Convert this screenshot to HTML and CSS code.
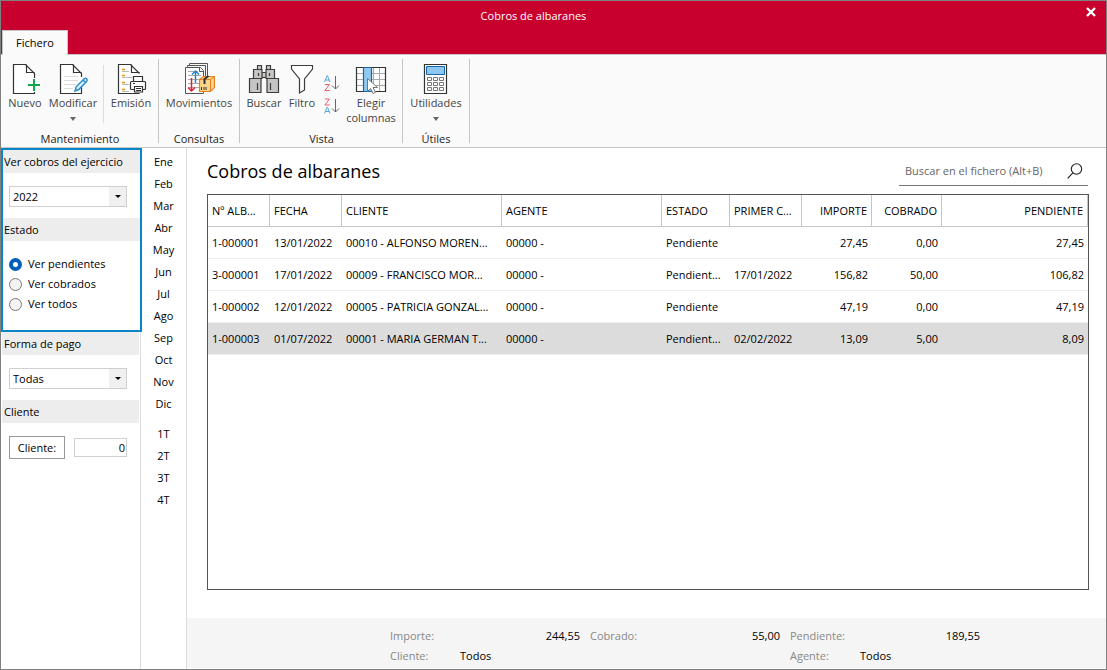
FILE: index.html
```html
<!DOCTYPE html>
<html lang="es">
<head>
<meta charset="utf-8">
<title>Cobros de albaranes</title>
<link rel="stylesheet" href="styles.css">
</head>
<body>
<div class="window">
  <header class="titlebar">
    <div class="title">Cobros de albaranes</div>
    <button class="close" type="button" aria-label="Cerrar"><svg width="10" height="10" viewBox="0 0 10 10"><path d="M1 1l8 8M9 1l-8 8" stroke="#fff" stroke-width="2.400"/></svg></button>
    <button class="tab" type="button">Fichero</button>
  </header>

  <nav class="ribbon">
    <section class="group g-mant">
      <div class="tools">
        <button class="tool w-46" type="button">
          <svg class="icon" viewBox="0 0 32 32" fill="none" stroke="#333" stroke-width="1.2"><path d="M25.500 15V10.500L16.500 1.500H4.500V30.500H25.500V29" fill="#fff"/><path d="M17.500 1.500V9.500H25.500"/><path d="M25 16v12M19 22h12" stroke="#0ea64e" stroke-width="2"/></svg>
          <span>Nuevo</span>
        </button>
        <button class="tool w-50" type="button">
          <svg class="icon" viewBox="0 0 32 32" fill="none" stroke="#333" stroke-width="1.2"><path d="M24.500 14V10.500L15.500 1.500H3.500V30.500H24.500V24" fill="#fff"/><path d="M16.500 1.500V9.500H24.500"/><path d="M7 13.500h14M7 17.500h14M7 21.500h12M7 25.500h9" stroke="#ddd" stroke-width="1"/><path d="M18 28l1.200-4.200 8-8q1.400-1.200 2.500 0t0 2.500l-8 8.200zM26 17l2.500 2.500" fill="#dff0fa" stroke="#2a8dcc" stroke-width="1.500"/></svg>
          <span>Modificar</span>
          <svg class="drop" viewBox="0 0 6 4"><path d="M0 0h6L3 4z" fill="#666"/></svg>
        </button>
        <i class="divider"></i>
        <button class="tool w-54" type="button">
          <svg class="icon" viewBox="0 0 32 32" fill="none" stroke="#333" stroke-width="1.200"><path d="M24.500 10.500L15.500 1.500H3.500V30.500H24.500" fill="#fff"/><path d="M16.500 1.500V9.500H24.500"/><path d="M7 6.500h3M7 12.500h3M7 19.500h3M7 26.500h3" stroke="#e79514" stroke-width="1.500"/><path d="M7 8.500h7M7 14.500h10M7 21.500h7M7 28.500h7" stroke="#bbb" stroke-width="1"/><path d="M18.500 19v-5.500h9V19" fill="#fff"/><rect x="15.500" y="18.500" width="15" height="8" rx="1" fill="#fff"/><path d="M19.500 23.500h8v5.500h-8z" fill="#fff"/><path d="M18 20.500h2M21 25.500h5M21 27.500h5" stroke-width="1"/></svg>
          <span>Emisión</span>
        </button>
      </div>
      <h2>Mantenimiento</h2>
    </section>
    <section class="group g-cons">
      <div class="tools">
        <button class="tool w-80" type="button">
          <svg class="icon" viewBox="0 0 32 32" fill="none" stroke="#555" stroke-width="1"><path d="M6.500 3V.5h18V13M4.500 5V2.500h18V13"/><path d="M2.500 4.500h15l3 3V30.500h-18z" fill="#fff"/><path d="M16.500 4.500v4h4"/><path d="M5 8.500h10M5 12.500h13M5 16.500h13M5 20.500h12M5 24.500h12" stroke="#aaa"/><path d="M12.500 20V8M9 11.500L12.500 8l3.500 3.500" stroke="#2486c8" stroke-width="1.500"/><path d="M8.500 15v13M5 24.500l3.500 3.500 3.500-3.500" stroke="#df2034" stroke-width="1.500"/><path d="M16.500 16.500l4-3h11v11l-4 4h-11z" fill="#f8d58a" stroke="#e58021" stroke-width="1.200"/><path d="M16.500 16.500h11l4-3M27.500 16.500v12" stroke="#e58021"/><path d="M21.500 21v-5l4-3" stroke="#333" stroke-width="2"/><path d="M18.500 24v3M21 24v3M23 24v3" stroke="#333"/></svg>
          <span>Movimientos</span>
        </button>
      </div>
      <h2>Consultas</h2>
    </section>
    <section class="group g-vista">
      <div class="tools">
        <button class="tool w-46" type="button">
          <svg class="icon" viewBox="0 0 32 32" fill="#c7c5c4" stroke="#3c3c3c" stroke-width="1.200"><path d="M9.500 2.500h4v4h-4zM18.500 2.500h4v4h-4zM13 9.500h6v5h-6z"/><path d="M5.500 6.500h8.500v9H5.500zM18 6.500h8.500v9H18zM1.500 15.500h11.500v14H1.500zM19 15.500h11.500v14H19z"/><path d="M10.500 10v3M21.500 10v3M9.500 20v7M22.500 20v7"/></svg>
          <span>Buscar</span>
        </button>
        <button class="tool w-30" type="button">
          <svg class="icon" viewBox="0 0 32 32" fill="#fff" stroke="#3c3c3c" stroke-width="1.200"><path d="M5.500 2.500h21v3.500l-8 10v11l-5 3V16l-8-10z"/></svg>
          <span>Filtro</span>
        </button>
        <div class="sorts">
          <button type="button" aria-label="Orden ascendente"><svg width="16" height="16" viewBox="0 0 16 16" fill="none"><path d="M.5 7L3 .8h.5L6 7M1.500 5h4" stroke="#55a9df"/><path d="M.8 9.500h4.700L.8 15.500h5" stroke="#e8616c"/><path d="M11.500 1v13M8 10.500l3.500 3.500 3.500-3.500" stroke="#666"/></svg></button>
          <button type="button" aria-label="Orden descendente"><svg width="16" height="16" viewBox="0 0 16 16" fill="none"><path d="M.8 1h4.700L.8 7h5" stroke="#e8616c"/><path d="M.5 15.500L3 9.300h.5L6 15.500M1.500 13.500h4" stroke="#55a9df"/><path d="M11.500 1v13M8 10.500l3.500 3.500 3.500-3.500" stroke="#666"/></svg></button>
        </div>
        <button class="tool w-48" type="button">
          <svg class="icon" viewBox="0 0 32 32" fill="none"><path d="M1.500 4.500h29v24h-29z" fill="#fff"/><path d="M1 10.500h30M1 16.500h30M1 22.500h30M18.500 4v24M24.500 4v24" stroke="#aaa"/><path d="M1.500 4.500h29v24h-29z" stroke="#333" stroke-width="1.200"/><path d="M8.500 4.500h8v24h-8z" fill="#92c9ef" stroke="#1467ad" stroke-width="1.200"/><path d="M12.500 15.500v13l3-3 2.500 5 2.500-1.200-2.500-4.800h4.500z" fill="#fff" stroke="#777"/></svg>
          <span>Elegir columnas</span>
        </button>
      </div>
      <h2>Vista</h2>
    </section>
    <section class="group g-util">
      <div class="tools">
        <button class="tool w-66" type="button">
          <svg class="icon" viewBox="0 0 32 32" fill="#fff"><path d="M4.500 1.500h22v29h-22z" stroke="#333" stroke-width="1.200"/><path d="M6.500 3.500h18v8h-18z" fill="#8dc6ef" stroke="#1467ad"/><path d="M7.500 14.500h4v3h-4zM13.500 14.500h4v3h-4zM19.500 14.500h4v3h-4zM7.500 19.500h4v3h-4zM13.500 19.500h4v3h-4zM19.500 19.500h4v3h-4zM7.500 24.500h4v3h-4zM13.500 24.500h4v3h-4zM19.500 24.500h4v3h-4z" stroke="#777"/></svg>
          <span>Utilidades</span>
          <svg class="drop" viewBox="0 0 6 4"><path d="M0 0h6L3 4z" fill="#666"/></svg>
        </button>
      </div>
      <h2>Útiles</h2>
    </section>
  </nav>

  <div class="body">
    <aside class="filters">
      <div class="focus">
        <h3><label for="ejercicio">Ver cobros del ejercicio</label></h3>
        <div class="combo"><select id="ejercicio"><option>2022</option></select><span class="arrow"><svg width="6" height="3" viewBox="0 0 6 3"><path d="M0 0h6L3 3z"/></svg></span></div>
        <h3>Estado</h3>
        <div class="radios">
          <label><input type="radio" name="estado" checked>Ver pendientes</label>
          <label><input type="radio" name="estado">Ver cobrados</label>
          <label><input type="radio" name="estado">Ver todos</label>
        </div>
      </div>
      <div class="more">
        <h3><label for="pago">Forma de pago</label></h3>
        <div class="combo"><select id="pago"><option>Todas</option></select><span class="arrow"><svg width="6" height="3" viewBox="0 0 6 3"><path d="M0 0h6L3 3z"/></svg></span></div>
        <h3>Cliente</h3>
        <div class="client"><button type="button">Cliente:</button><input type="text" value="0" aria-label="Cliente"></div>
      </div>
    </aside>

    <nav class="periods">
      <button type="button">Ene</button><button type="button">Feb</button><button type="button">Mar</button><button type="button">Abr</button><button type="button">May</button><button type="button">Jun</button><button type="button">Jul</button><button type="button">Ago</button><button type="button">Sep</button><button type="button">Oct</button><button type="button">Nov</button><button type="button">Dic</button>
      <button class="quarter" type="button">1T</button><button type="button">2T</button><button type="button">3T</button><button type="button">4T</button>
    </nav>

    <main class="main">
      <div class="content">
        <div class="heading">
          <h1>Cobros de albaranes</h1>
          <div class="search"><input type="text" placeholder="Buscar en el fichero (Alt+B)" aria-label="Buscar en el fichero"><svg width="16" height="16" viewBox="0 0 16 16" fill="none" stroke="#222" stroke-width="1.100"><circle cx="9.500" cy="6" r="5.200"/><path d="M5.800 9.800L.7 15.300"/></svg></div>
        </div>
        <div class="grid">
          <table>
            <colgroup><col class="c-62"><col class="c-72"><col class="c-160"><col class="c-160"><col class="c-68"><col class="c-72"><col class="c-70"><col class="c-70"><col></colgroup>
            <thead><tr><th>Nº ALB...</th><th>FECHA</th><th>CLIENTE</th><th>AGENTE</th><th>ESTADO</th><th>PRIMER C...</th><th class="num">IMPORTE</th><th class="num">COBRADO</th><th class="num">PENDIENTE</th></tr></thead>
            <tbody>
              <tr><td>1-000001</td><td>13/01/2022</td><td>00010 - ALFONSO MOREN...</td><td>00000 -</td><td>Pendiente</td><td></td><td class="num">27,45</td><td class="num">0,00</td><td class="num">27,45</td></tr>
              <tr><td>3-000001</td><td>17/01/2022</td><td>00009 - FRANCISCO MOR...</td><td>00000 -</td><td>Pendient...</td><td>17/01/2022</td><td class="num">156,82</td><td class="num">50,00</td><td class="num">106,82</td></tr>
              <tr><td>1-000002</td><td>12/01/2022</td><td>00005 - PATRICIA GONZAL...</td><td>00000 -</td><td>Pendiente</td><td></td><td class="num">47,19</td><td class="num">0,00</td><td class="num">47,19</td></tr>
              <tr class="selected"><td>1-000003</td><td>01/07/2022</td><td>00001 - MARIA GERMAN T...</td><td>00000 -</td><td>Pendient...</td><td>02/02/2022</td><td class="num">13,09</td><td class="num">5,00</td><td class="num">8,09</td></tr>
            </tbody>
          </table>
        </div>
      </div>
      <footer class="totals">
        <div class="total"><span>Importe:</span><b>244,55</b></div>
        <div class="total"><span>Cobrado:</span><b>55,00</b></div>
        <div class="total"><span>Pendiente:</span><b>189,55</b></div>
        <div class="total who"><span>Cliente:</span><b>Todos</b></div>
        <div></div>
        <div class="total who"><span>Agente:</span><b>Todos</b></div>
      </footer>
    </main>
  </div>
</div>
</body>
</html>
```
FILE: styles.css
```css
* { box-sizing: border-box; }
body { margin: 0; font: 11px/16px "Open Sans", "Noto Sans", sans-serif; color: #000; }
h1, h2, h3 { margin: 0; font-weight: 400; }
button, input, select { font: inherit; color: inherit; margin: 0; }
button { background: none; border: 0; padding: 0; }
svg { display: block; }

.window { min-height: 100vh; border: 1px solid #808080; display: flex; flex-direction: column; background: #fff; }

.titlebar { position: relative; background: #c8002d; height: 54px; display: flex; flex-direction: column; justify-content: space-between; align-items: flex-start; border-bottom: 1px solid #c6c6c6; }
.title { color: #fff; align-self: center; padding: 7px 40px 0 0; }
.close { position: absolute; top: 6px; right: 10px; }
.tab { background: #fafafa; border: 1px solid #c6c6c6; border-bottom: 0; width: 66px; height: 25px; margin: 0 0 -1px 1px; }

.ribbon { display: flex; background: #fafafa; padding: 4px 0; height: 93px; border-bottom: 1px solid #c6c6c6; }
.group { display: flex; flex-direction: column; border-right: 1px solid #c6c6c6; }
.group h2 { font-size: 11px; line-height: 8px; text-align: center; color: #222; }
.g-mant { width: 158px; padding-left: 1px; }
.g-cons { width: 81px; }
.g-vista { width: 163px; padding-left: 1px; }
.g-util { width: 67px; }
.tools { display: flex; align-items: flex-start; padding-top: 4px; height: 76px; flex: none; }
.tool { display: flex; flex-direction: column; align-items: center; color: #444; line-height: 15px; flex: none; }
.icon { width: 32px; height: 32px; }
.drop { width: 6px; height: 4px; margin-top: 7px; }
.divider { width: 1px; height: 58px; margin: 2px 0 0 5px; background: #ddd; }
.w-30 { width: 30px; }
.w-46 { width: 46px; }
.w-48 { width: 48px; }
.w-50 { width: 50px; }
.w-54 { width: 54px; }
.w-66 { width: 66px; }
.w-80 { width: 80px; }
.sorts { width: 30px; display: flex; flex-direction: column; align-items: center; gap: 7px; padding-top: 12px; }

.body { flex: 1; display: flex; }
.filters { width: 140px; flex: none; border-right: 1px solid #ddd; }
.filters h3 { font-size: 11px; line-height: 23px; background: #ededed; padding-left: 2px; }
.focus { width: 141px; height: 184px; border: 2px solid #0a84c9; position: relative; }
.filters .focus h3 { padding-left: 1px; }
.more { padding: 0 1px; }
.combo { position: relative; width: 118px; height: 21px; margin: 13px 0 11px 6px; }
.more .combo { margin-left: 7px; }
.combo select { appearance: none; width: 100%; height: 100%; border: 1px solid #d0d0d0; border-radius: 0; background: #fff; padding: 0 20px 0 3px; }
.arrow { position: absolute; top: 1px; right: 1px; bottom: 1px; width: 17px; background: #f0f0f0; display: flex; align-items: center; justify-content: center; pointer-events: none; }
.radios { padding: 13px 0 0 6px; }
.radios label { display: flex; align-items: center; gap: 6px; height: 20px; }
.radios input { appearance: none; width: 13px; height: 13px; border: 1px solid #777; border-radius: 50%; background: #f3f3f3; }
.radios input:checked { border: 4px solid #005fb8; background: #fff; }
.client { display: flex; gap: 9px; align-items: center; padding: 13px 0 0 7px; }
.client button { width: 56px; height: 23px; border: 1px solid #999; background: #fff; }
.client input { width: 53px; height: 19px; border: 1px solid #d0d0d0; text-align: right; padding: 0 1px; }

.periods { width: 46px; flex: none; border-right: 1px solid #ddd; display: flex; flex-direction: column; padding-top: 3px; }
.periods button { height: 22px; }
.periods .quarter { margin-top: 8px; }

.main { flex: 1; min-width: 0; display: flex; flex-direction: column; }
.content { flex: 1; display: flex; flex-direction: column; padding: 8px 17px 28px 20px; }
.heading { display: flex; justify-content: space-between; align-items: flex-start; height: 38px; padding-right: 1px; }
h1 { font-size: 18px; line-height: 30px; }
.search { display: flex; align-items: center; width: 189px; height: 30px; border-bottom: 1px solid #777; padding: 0 5px 0 6px; }
.search input { flex: 1; min-width: 0; border: 0; padding: 0; outline: 0; }
.search input::placeholder { color: #666; opacity: 1; }

.grid { flex: 1; border: 1px solid #555; }
table { width: 100%; border-collapse: separate; border-spacing: 0; table-layout: fixed; }
th, td { height: 32px; padding: 0 4px; text-align: left; font-weight: 400; white-space: nowrap; overflow: hidden; }
th { border-right: 1px solid #c6c6c6; border-bottom: 1px solid #c6c6c6; }
td { border-bottom: 1px solid #ececec; }
td.num, th.num { text-align: right; }
.selected td { background: #dcdcdc; }
.c-62 { width: 62px; }
.c-68 { width: 68px; }
.c-70 { width: 70px; }
.c-72 { width: 72px; }
.c-160 { width: 160px; }

.totals { display: grid; grid-template-columns: repeat(3, 190px); gap: 0 10px; grid-auto-rows: 20px; background: #f5f5f5; padding: 8px 0 2px 203px; margin-bottom: 1px; line-height: 20px; }
.total { display: flex; justify-content: space-between; }
.total span { color: #888; }
.total b { font-weight: 400; color: #000; }
.who { justify-content: flex-start; }
.who span { width: 70px; }
```
